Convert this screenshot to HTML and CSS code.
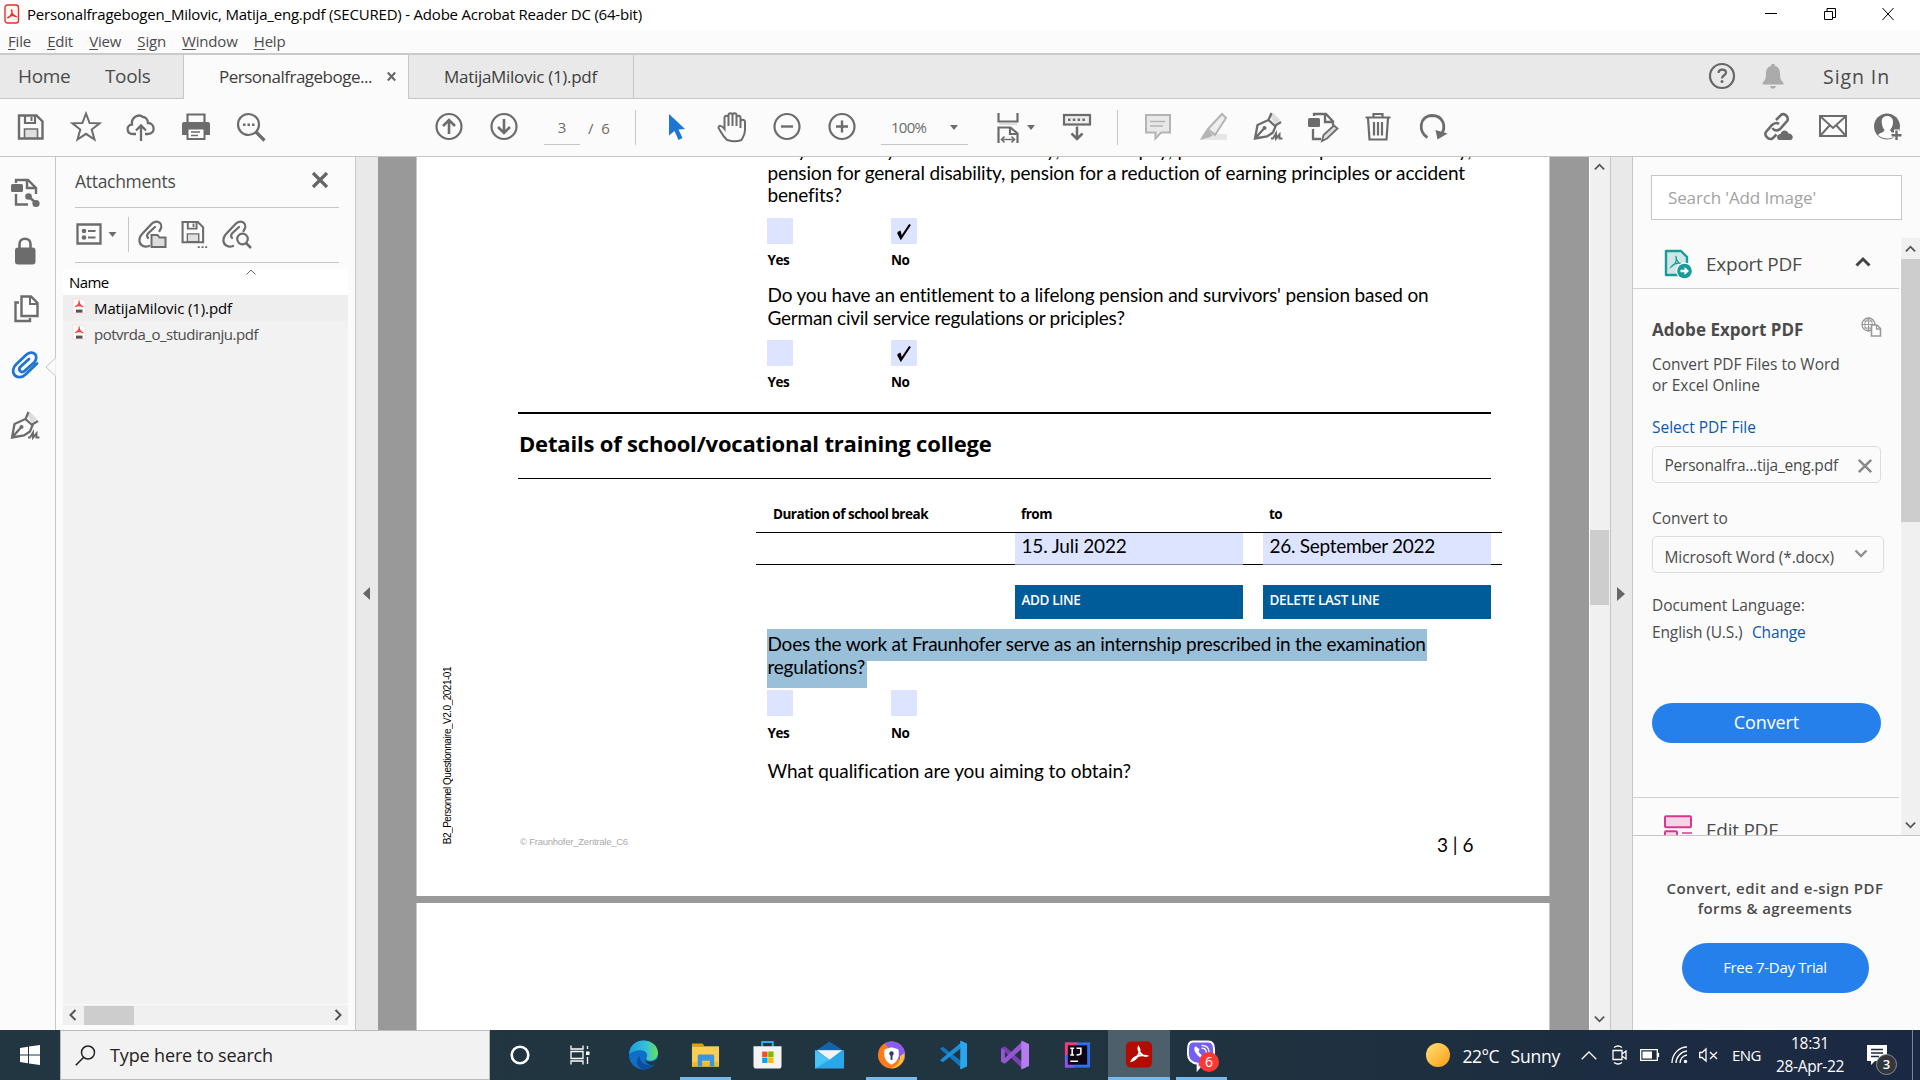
FILE: index.html
```
<!DOCTYPE html>
<html lang="en">
<head>
<meta charset="utf-8">
<title>Personalfragebogen_Milovic, Matija_eng.pdf (SECURED) - Adobe Acrobat Reader DC (64-bit)</title>
<link rel="stylesheet" href="styles.css">
</head>
<body>
<svg width="0" height="0" class="defs">
  <defs>
    <symbol id="save" viewBox="0 0 30 30"><path d="M3 3.500h17.500l6 6v17H3z" fill="none" stroke="currentColor" stroke-width="2.400"/><path d="M9 4v7h10V4" fill="none" stroke="currentColor" stroke-width="2.200"/><path d="M14.500 5h2v4h-2z" fill="currentColor"/><path d="M8.500 26v-9h13v9z" fill="#e0e0e0" stroke="currentColor" stroke-width="1.600"/></symbol>
    <symbol id="caret" viewBox="0 0 8 5"><path d="M0 0h8L4 5z" fill="currentColor"/></symbol>
    <symbol id="pen" viewBox="0 0 30 30"><path d="M17 4l3-3 7 7-5 4z" fill="#dcdcdc"/><path d="M18.500 1l-3 7L4.500 13 2 26.500 14 24.500l6-4 3-7.500 5-3M15.500 8l6.500 6M2.500 26l8-9" fill="none" stroke="currentColor" stroke-width="2.300"/><circle cx="11.500" cy="16" r="2" fill="currentColor"/><path d="M18 26.500h2l3-5v5l3.500-4v4h3" fill="none" stroke="currentColor" stroke-width="2"/></symbol>
    <symbol id="clip" viewBox="0 0 30 30"><path d="M27 14.500L15.500 25.500C12 29 7 29 4.500 26S3 18.500 6 15.500L16.500 5.500C19 3 23 3 25 5s1.500 6-1 8.500L14.500 22c-1.500 1.300-3.500 1.300-4.500 0s-.7-3.200.7-4.500L19 10" fill="none" stroke="currentColor" stroke-width="2.800" stroke-linecap="round"/></symbol>
    <symbol id="halfclip" viewBox="0 0 30 30"><path d="M12 27C7 29 3 26 2.500 22.500S4 16 6 14L15 4.500C17.500 2 21 2 23 4s1.500 5.500-.5 8M11 19c-1.500-1.500-1-3.500.5-5L18 8" fill="none" stroke="currentColor" stroke-width="2.300" stroke-linecap="round"/></symbol>
    <symbol id="up" viewBox="0 0 12 8"><path d="M1 6.500L6 1.500l5 5" fill="none" stroke="currentColor" stroke-width="2"/></symbol>
    <symbol id="down" viewBox="0 0 12 8"><path d="M1 1.500l5 5 5-5" fill="none" stroke="currentColor" stroke-width="2"/></symbol>
    <symbol id="tick" viewBox="0 0 26 26"><path d="M7 14.500l3 5.500L19 6.500" fill="none" stroke="#000" stroke-width="2.200"/><path d="M6.500 14l3-1.500L11 18l-1.500 4z"/></symbol>
    <symbol id="pdf" viewBox="0 0 16 18"><path d="M1 .5h10.500l3.500 3.500v12.500H1z" fill="#fff" stroke="#f8dada"/><path d="M8 2c.5 3 0 4.500-4.500 7.500C6 7.800 9.500 7.800 13 9.500 10.500 9 8 6 8 2z" fill="#f44" stroke="#f33" stroke-width="1.200"/><path d="M4.500 12.500h7.500v3.500H4.500z" fill="#555"/></symbol>
  </defs>
</svg>
<div class="desktop">
  <header class="titlebar">
    <svg class="appicon" viewBox="0 0 16 20"><rect x="1" y="1" width="13.500" height="18" rx="2.500" fill="#fff5f4" stroke="#e4332b" stroke-width="1.400"/><path d="M7.500 5.500c1.500 4-1 7-4 8.500 2-2.500 6-3.500 8.500-1.500-2 0-4.500-3-4.500-7z" fill="none" stroke="#e4332b" stroke-width="1.400"/></svg>
    <span class="title">Personalfragebogen_Milovic, Matija_eng.pdf (SECURED) - Adobe Acrobat Reader DC (64-bit)</span>
    <div class="winbtns">
      <svg viewBox="0 0 12 12"><path d="M0 5.500h12"/></svg>
      <svg viewBox="0 0 12 12"><path d="M.5 3.500h8v8h-8zM3 3.500v-3h8.500v9H8.500"/></svg>
      <svg viewBox="0 0 12 12"><path d="M.5 0l11 12M11.500 0l-11 12"/></svg>
    </div>
  </header>
  <nav class="menu"><span><u>F</u>ile</span><span><u>E</u>dit</span><span><u>V</u>iew</span><span><u>S</u>ign</span><span><u>W</u>indow</span><span><u>H</u>elp</span></nav>
  <div class="tabs">
    <span class="home">Home</span><span class="tools">Tools</span>
    <div class="tab active"><span>Personalfrageboge...</span><svg viewBox="0 0 9 9"><path d="M.8.5l7.400 8M8.200.5l-7.400 8" stroke="#666" stroke-width="2"/></svg></div>
    <div class="tab"><span>MatijaMilovic (1).pdf</span></div>
    <div class="account">
      <svg width="28" height="28" viewBox="0 0 28 28"><circle cx="14" cy="14" r="12" fill="none" stroke="#666" stroke-width="2.200"/><path d="M10.500 11c0-4.500 7.500-4.500 7.500-.5 0 3-4 2.500-4 6" fill="none" stroke="#666" stroke-width="2.200"/><circle cx="14" cy="19.500" r="1.500" fill="#666"/></svg>
      <svg width="22" height="26" viewBox="0 0 22 26"><path d="M9 3c0-3 4-3 4 0 4 1 5 4 5 8 0 5 1 6 3.500 9v1.500h-21V20C3 17 4 16 4 11c0-4 1-7 5-8zM8 23h6c-1 3.500-5 3.500-6 0z" fill="#ababab"/></svg>
      <span>Sign In</span>
    </div>
  </div>
  <div class="toolbar">
    <div class="group g1">
      <svg><use href="#save"/></svg>
      <svg viewBox="0 0 30 30"><path d="M15 1.500l3.600 9.500 10 .3-7.900 6.200 2.800 10L15 21.800 6.500 27.500l2.800-10L1.400 11.300l10-.3z" fill="none" stroke="currentColor" stroke-width="2"/></svg>
      <svg viewBox="0 0 30 30"><path d="M10 22H7c-7 0-7-9-1-9.500C5 6 12 1 17 5c2 0 5 2 5 6 7 0 8 11 0 11h-3M15 29V14M10 18.500l5-5 5 5" fill="none" stroke="currentColor" stroke-width="2.300"/></svg>
      <svg viewBox="0 0 30 30"><path d="M6.500 10V2.500h17V10" fill="none" stroke="currentColor" stroke-width="2.200"/><path d="M1 12q0-2 2-2h24q2 0 2 2v11h-5v-5H6v5H1z" fill="currentColor"/><path d="M6.500 16.500h17v10.500h-17z" fill="#fff" stroke="currentColor" stroke-width="2"/><path d="M10 20h9M10 23.500h7" stroke="currentColor" stroke-width="1.500"/></svg>
      <svg viewBox="0 0 30 30"><circle cx="12.500" cy="12.500" r="10.500" fill="none" stroke="currentColor" stroke-width="2.200"/><path d="M20 20l8.500 8.500" stroke="currentColor" stroke-width="3.200"/><path d="M7 11.500h2.500v2.500H7zM11.500 11.500h2.500v2.500h-2.500zM16 11.500h2.500v2.500H16z" fill="currentColor"/></svg>
    </div>
    <div class="group g2">
      <svg viewBox="0 0 30 30"><circle cx="15" cy="14.500" r="12.500" fill="none" stroke="currentColor" stroke-width="2.200"/><path d="M15 22V8M9 14l6-6 6 6" fill="none" stroke="currentColor" stroke-width="2.600"/></svg>
      <svg viewBox="0 0 30 30"><circle cx="15" cy="14.500" r="12.500" fill="none" stroke="currentColor" stroke-width="2.200"/><path d="M15 7v14M9 15l6 6 6-6" fill="none" stroke="currentColor" stroke-width="2.600"/></svg>
    </div>
    <span class="pageno">3</span><span class="pagecount">/&nbsp; 6</span><i class="sep s1"></i>
    <div class="group g3">
      <svg viewBox="0 0 30 30"><path d="M7 2l16 15-6.500.5 4 8.500-4 2-4-9L7 23.500z" fill="#1f76d0"/></svg>
      <svg viewBox="0 0 30 30"><path d="M10 28C5 23 3 18 1.500 16c0-3 3-3 6 1V6c0-3 4-3 4 0v8V3.500c0-3 4-3 4 0V14 3.500c0-3 4-3 4 0V14 6c0-3 4-3 4 0v10V10c0-3 4-3 4.500 0v8c0 5-2 7-3.500 10-4 1.500-10 1.500-14 0z" fill="none" stroke="currentColor" stroke-width="2"/></svg>
      <svg viewBox="0 0 30 30"><circle cx="15" cy="14.500" r="12.500" fill="none" stroke="currentColor" stroke-width="2.200"/><path d="M9 14.500h12" stroke="currentColor" stroke-width="2.400"/></svg>
      <svg viewBox="0 0 30 30"><circle cx="15" cy="14.500" r="12.500" fill="none" stroke="currentColor" stroke-width="2.200"/><path d="M9 14.500h12M15 8.500v12" stroke="currentColor" stroke-width="2.400"/></svg>
    </div>
    <div class="zoom"><span>100%</span><svg class="caret"><use href="#caret"/></svg></div>
    <svg class="fit" viewBox="0 0 22 30"><path d="M1.500 0v8.500h19V0M1.500 30V14.500h12l7 6V30M13 14.500v6.500h7" fill="none" stroke="currentColor" stroke-width="2.200"/><path d="M2 10h18v2H2z" fill="#ddd"/><path d="M4.500 26.500h13M7.500 23.500l-3 3 3 3M14.500 23.500l3 3-3 3" fill="none" stroke="currentColor" stroke-width="1.600"/></svg>
    <svg class="caret fitcaret"><use href="#caret"/></svg>
    <svg class="kbd" viewBox="0 0 30 30"><rect x="2" y="3" width="26" height="9.500" fill="#eee" stroke="currentColor" stroke-width="2.200"/><path d="M6 7.700h18" stroke="currentColor" stroke-width="2.500" stroke-dasharray="2.500 2.300"/><path d="M15 14.500v12M9.500 21.500l5.500 5.500 5.500-5.500" fill="none" stroke="currentColor" stroke-width="2.500"/></svg>
    <i class="sep s2"></i>
    <div class="group g4">
      <svg viewBox="0 0 30 30" class="dim"><path d="M3 3h24v17.500h-9l-5.500 6v-6H3z" fill="#e8e8e8" stroke="currentColor" stroke-width="2"/><path d="M7 9.500h15M7 14h13" stroke="currentColor" stroke-width="1.500"/></svg>
      <svg viewBox="0 0 30 30" class="dim"><path d="M9 22h20v6H3z" fill="#e6e6e6"/><path d="M24 2l4 4-11 17-7-6z" fill="#eee" stroke="currentColor" stroke-width="2"/><path d="M9 17l6 6-3 2-10 3 4-7z" fill="currentColor"/></svg>
      <svg><use href="#pen"/></svg>
      <svg viewBox="0 0 30 30"><path d="M6 4V2h12l7 7.500v4M17 2.500V10h7M5 17v10h8" fill="none" stroke="currentColor" stroke-width="2.300"/><rect x="0" y="6" width="12" height="9" rx="1.500" fill="currentColor"/><path d="M14 29l1.500-6L26 13.500l3.500 3L19 26.500z" fill="#ddd" stroke="currentColor" stroke-width="1.800"/></svg>
      <svg viewBox="0 0 30 30"><path d="M2.500 5.500h25M10.500 5V2h9v3M5 6l1.500 21.500h17L25 6M11 10v13.500M15 10v13.500M19 10v13.500" fill="none" stroke="currentColor" stroke-width="2.200"/></svg>
      <svg viewBox="0 0 30 30"><path d="M9.500 25.500C0 20 1 4 14 3.500c11 0 15 11 9 19.500" fill="none" stroke="currentColor" stroke-width="2.800"/><path d="M17.500 18l12 3.500-10 6z" fill="currentColor"/></svg>
    </div>
    <div class="group g5">
      <svg viewBox="0 0 30 30"><path d="M13 8l5-5c2.500-2.500 8 1 6.500 5.500L17 17c-2 2-6 2-7.500-1M16 12c-2-1.500-5-1-7 1l-6 7c-2 3 2 8.500 6.500 6.500l4-4" fill="none" stroke="currentColor" stroke-width="2.600"/><path d="M16 28c-3-1-2.500-6 1.500-6 1-5 7-4.500 8-.5 5 0 5.500 6 2 6.500z" fill="currentColor"/></svg>
      <svg viewBox="0 0 30 30"><path d="M2 4h26v20H2zM2.500 4.500L15 16 27.500 4.500M2.500 23.500l9-10M27.500 23.500l-9-10" fill="none" stroke="currentColor" stroke-width="2"/></svg>
      <svg viewBox="0 0 30 30"><circle cx="14" cy="14.500" r="13" fill="currentColor"/><path d="M14 4c-4.500 0-6 4-5 8 .5 3 1 4 2.500 6-1 3-4.500 2.500-6.500 5 4 4 12 5 16 1l-4-6c1.500-2 3-4 3-8 0-3.500-2-6-6-6z" fill="#fff"/><path d="M23.500 17.500v11M18 23h11" stroke="#fbfbfb" stroke-width="5"/><path d="M23.500 18.500v9.500M18.500 23.300h10" stroke="currentColor" stroke-width="2.400"/></svg>
    </div>
  </div>
  <main class="work">
    <aside class="rail">
      <svg viewBox="0 0 30 30"><path d="M6 5V2h12l8 8v6M17 2.500V10h8M6 16v10.500h12" fill="none" stroke="currentColor" stroke-width="2.400"/><rect x="1" y="6" width="12" height="8" rx="1.500" fill="currentColor"/><path d="M18 18l8 7" stroke="currentColor" stroke-width="2.500"/><circle cx="18.500" cy="18.500" r="3.300" fill="currentColor"/><circle cx="26" cy="25.500" r="3.600" fill="currentColor"/></svg>
      <svg viewBox="0 0 30 30"><path d="M9.500 13V8c0-7 11-7 11 0v5" fill="none" stroke="currentColor" stroke-width="2.600"/><rect x="5" y="11.500" width="20.500" height="17" rx="3" fill="currentColor"/></svg>
      <svg viewBox="0 0 30 30"><path d="M9 8.500H5.500V27H20v-3" fill="none" stroke="currentColor" stroke-width="2.400"/><path d="M11.500 2.500h9.500l6.500 6.500v13h-16z" fill="#fff" stroke="currentColor" stroke-width="2.400"/><path d="M20 3v7h7" fill="none" stroke="currentColor" stroke-width="2"/></svg>
      <div class="current"><svg><use href="#clip"/></svg><svg class="notch" viewBox="0 0 11 18"><path d="M10.500 0v18H12V0z" fill="#fbfbfb"/><path d="M10.500 0L1 9l9.500 9" fill="#fbfbfb" stroke="#c4c4c4"/></svg></div>
      <svg><use href="#pen"/></svg>
    </aside>
    <section class="attach">
      <div class="ahead"><span>Attachments</span><svg viewBox="0 0 16 16"><path d="M1 1l14 14M15 1L1 15" stroke="#666" stroke-width="3.200"/></svg></div>
      <div class="atools">
        <svg class="opt" viewBox="0 0 26 22"><path d="M1.500 1.500h23v19h-23z" fill="none" stroke="currentColor" stroke-width="2.300"/><circle cx="8" cy="8" r="2.300" fill="currentColor"/><circle cx="8" cy="14.500" r="2.300" fill="currentColor"/><path d="M12 8h7.500M12 14.500h7.500" stroke="currentColor" stroke-width="2"/></svg>
        <svg class="caret"><use href="#caret"/></svg><i class="sep"></i>
        <svg viewBox="0 0 30 30"><use href="#halfclip"/><path d="M14.500 16h6l2 2.500h6v9.500h-14z" fill="#ddd" stroke="currentColor" stroke-width="2"/></svg>
        <svg viewBox="0 0 30 32"><use href="#save" width="28" height="28"/><path d="M19 30h10" stroke="currentColor" stroke-width="2" stroke-dasharray="2.200 1.800"/></svg>
        <svg viewBox="0 0 30 30"><use href="#halfclip"/><circle cx="21.500" cy="20" r="5.300" fill="#fbfbfb" stroke="currentColor" stroke-width="2.200"/><path d="M25 24l5 5" stroke="currentColor" stroke-width="2.500"/></svg>
      </div>
      <div class="list">
        <div class="lhead"><svg class="sort" viewBox="0 0 10 6"><path d="M.5 5.500L5 1l4.500 4.500" fill="none" stroke="#666"/></svg><span>Name</span></div>
        <div class="row sel"><svg><use href="#pdf"/></svg><span class="r1">MatijaMilovic (1).pdf</span></div>
        <div class="row"><svg><use href="#pdf"/></svg><span class="r2">potvrda_o_studiranju.pdf</span></div>
      </div>
      <div class="hscroll"><svg viewBox="0 0 8 12"><path d="M6.500 1l-5 5 5 5" fill="none" stroke="#555" stroke-width="2"/></svg><i></i><svg viewBox="0 0 8 12"><path d="M1.500 1l5 5-5 5" fill="none" stroke="#555" stroke-width="2"/></svg></div>
    </section>
    <div class="strip left"><svg width="7" height="13" viewBox="0 0 7 13"><path d="M7 0v13L0 6.500z" fill="#666"/></svg></div>
    <section class="canvas">
      <article class="page">
        <div class="margin"><span>B2_Personnel Questionnaire_V2.0_2021-01</span></div>
        <div class="content">
          <div class="q q1"><p class="l0">Do you already receive an annuity, widow's pay, pension for occupational disability,</p><p class="l1">pension for general disability, pension for a reduction of earning principles or accident</p><p>benefits?</p></div>
          <div class="boxes b1"><i></i><i><svg><use href="#tick"/></svg></i></div>
          <div class="yn"><b>Yes</b><b>No</b></div>
          <div class="q q2"><p>Do you have an entitlement to a lifelong pension and survivors' pension based on</p><p class="l2">German civil service regulations or priciples?</p></div>
          <div class="boxes b2"><i></i><i><svg><use href="#tick"/></svg></i></div>
          <div class="yn y2"><b>Yes</b><b>No</b></div>
          <h2>Details of school/vocational training college</h2>
          <div class="thead"><b>Duration of school break</b><b>from</b><b>to</b></div>
          <div class="trow"><span class="d1">15. Juli 2022</span><span>26. September 2022</span></div>
          <div class="btns"><b>ADD LINE</b><b>DELETE LAST LINE</b></div>
          <div class="selection"><div class="sa">Does the work at Fraunhofer serve as an internship prescribed in the examination</div><div class="sb"><p>regulations?</p></div></div>
          <div class="boxes b3"><i></i><i></i></div>
          <div class="yn y3"><b>Yes</b><b>No</b></div>
          <div class="q q3"><p>What qualification are you aiming to obtain?</p></div>
          <footer><small>© Fraunhofer_Zentrale_C6</small><span>3 | 6</span></footer>
        </div>
      </article>
      <article class="page next"></article>
    </section>
    <div class="vscroll doc"><svg><use href="#up"/></svg><i></i><svg><use href="#down"/></svg></div>
    <div class="strip right"><svg width="8" height="14" viewBox="0 0 8 14"><path d="M0 0v14l8-7z" fill="#666"/></svg></div>
    <aside class="panel">
      <div class="search">Search 'Add Image'</div>
      <div class="ptools">
        <div class="pcol">
          <div class="phead"><svg class="exp" viewBox="0 0 28 30"><path d="M2 2h15l6 6v18H2z" fill="#cfe6e6" stroke="#1a9a9a" stroke-width="2.400" stroke-linejoin="round"/><path d="M12 7c1 5-1 9-5 11 2-3 7-5 11-3-3 0-6-3-6-8z" fill="none" stroke="#1a9a9a" stroke-width="1.300"/><circle cx="20.500" cy="22" r="8.500" fill="#fbfbfb"/><circle cx="20.500" cy="22" r="7.300" fill="#1a9a9a"/><path d="M16.500 20.800h4v-2.800l4.500 4-4.500 4v-2.800h-4z" fill="#fff"/></svg><span>Export PDF</span><svg class="chev" viewBox="0 0 16 10"><path d="M1.500 8.500L8 2l6.500 6.500" fill="none" stroke="#444" stroke-width="3"/></svg></div>
          <div class="pbody">
            <div class="ptitle"><b>Adobe Export PDF</b><svg viewBox="0 0 20 20"><circle cx="7.500" cy="7.500" r="6.500" fill="none" stroke="#999" stroke-width="1.300"/><path d="M1 7.500h13M7.500 1v13M2.500 4h10M2.500 11h10M7.500 1c-5 4-5 9 0 13M7.500 1c5 4 5 9 0 13" fill="none" stroke="#999"/><path d="M10.500 8h5.500l3.500 3.500V19h-9z" fill="#fff" stroke="#999" stroke-width="1.600"/><path d="M15.500 8v4h4" fill="none" stroke="#999" stroke-width="1.300"/></svg></div>
            <p class="desc">Convert PDF Files to Word<br>or Excel Online</p>
            <a class="pick">Select PDF File</a>
            <div class="file"><span>Personalfra...tija_eng.pdf</span><svg viewBox="0 0 14 14"><path d="M.8.800l12.400 12.400M13.200.8L.8 13.200" stroke="#8a8a8a" stroke-width="2.600"/></svg></div>
            <p class="conv">Convert to</p>
            <div class="drop"><span>Microsoft Word (*.docx)</span><svg viewBox="0 0 14 9"><path d="M1.500 1.500L7 7l5.500-5.500" fill="none" stroke="#8f8f8f" stroke-width="2.400"/></svg></div>
            <p class="lang">Document Language:</p>
            <p class="lang2">English (U.S.) <a>Change</a></p>
            <div class="cbtn">Convert</div>
          </div>
          <div class="phead edit"><svg viewBox="0 0 28 30"><rect x="1" y="1.300" width="26" height="11" rx="1" fill="#f7d3e6" stroke="#d83790" stroke-width="2"/><rect x="1" y="16.300" width="12" height="11" rx="1" fill="#f7d3e6" stroke="#d83790" stroke-width="2"/><path d="M18 18h10" stroke="#d83790" stroke-width="1.500"/></svg><span>Edit PDF</span></div>
        </div>
        <div class="vscroll tools2"><svg><use href="#up"/></svg><i></i><svg><use href="#down"/></svg></div>
      </div>
      <div class="promo"><p>Convert, edit and e-sign PDF</p><p class="p2">forms &amp; agreements</p><div class="trial">Free 7-Day Trial</div></div>
    </aside>
  </main>
  <footer class="taskbar">
    <div class="start"><svg width="20" height="20" viewBox="0 0 20 20"><path d="M0 3l8-1.200v7.700H0zM9 1.600L20 0v9.500H9zM0 10.500h8v7.700L0 17zM9 10.500h11V20L9 18.400z" fill="#fff"/></svg></div>
    <div class="find"><svg width="21" height="21" viewBox="0 0 21 21"><circle cx="13" cy="7.500" r="6.500" fill="none" stroke="#222" stroke-width="1.500"/><path d="M8.500 12.500L.8 20.200" stroke="#222" stroke-width="1.600"/></svg><span>Type here to search</span></div>
    <div class="sys"><svg viewBox="0 0 30 30"><circle cx="15" cy="15" r="8.300" fill="none" stroke="#fff" stroke-width="2.600"/></svg></div>
    <div class="sys"><svg viewBox="0 0 30 30"><path d="M6 5.500v3.500h12V5.500M6 24.500v-3.500h12v3.500M6 11.500h12v7H6zM22.500 6v3M22.500 17v7" fill="none" stroke="#fff" stroke-width="1.300"/><path d="M21 11.500h3.500v3.500h-3.500z" fill="#fff"/></svg></div>
    <div class="apps">
      <div><svg viewBox="0 0 30 30"><defs><linearGradient id="e1" x1="0" x2="1"><stop stop-color="#1b9de2"/><stop offset=".6" stop-color="#35c1d6"/><stop offset="1" stop-color="#6be05a"/></linearGradient></defs><circle cx="15" cy="15" r="15" fill="#0f6fc6"/><path d="M0 14C1 4 8 0 15 0c9 0 15 6 15 13 0 5-4 8-8 8-3 0-5-1-4-3 2-3 0-8-6-8-5 0-10 2-12 4z" fill="url(#e1)"/><path d="M11 16c0 6 5 10 11 9 2 0 4-1 5-2-3 5-8 7-12 7-7-1-9-10-4-14z" fill="#0c4ea0"/><path d="M18 17.500c-1 2 0 4 4 4.300 3 .2 6-1.300 7.500-3.300L31 24l-3 .5c-2 .8-4 1-6 .5-4-1-6-4-4-7.500z" fill="#213640"/></svg></div>
      <div class="run"><svg viewBox="0 0 30 30"><path d="M1 3h11l2 3H1z" fill="#e0a100"/><path d="M1 6h28v21H1z" fill="#fccd55"/><path d="M1 22h28v5H1z" fill="#f0b93a"/><path d="M7 27V16q0-1.500 1.500-1.500h14q1.500 0 1.500 1.500v11h-4.500v-6h-8v6z" fill="#3a95e0"/></svg></div>
      <div><svg viewBox="0 0 30 30"><path d="M9.500 7V1.500h11V7" fill="none" stroke="#27b3ea" stroke-width="2"/><path d="M.5 6h29v20q0 3-3 3h-23q-3 0-3-3z" fill="#f3f3f3"/><path d="M9.500 11.500H15V17H9.500z" fill="#f25022"/><path d="M15.700 11.500h5.500V17h-5.500z" fill="#7fba00"/><path d="M9.500 17.700H15v5.500H9.500z" fill="#00a4ef"/><path d="M15.700 17.700h5.500v5.500h-5.500z" fill="#ffb900"/></svg></div>
      <div><svg viewBox="0 0 30 30"><path d="M0 11L15 1l15 10z" fill="#1463ad"/><path d="M0 10h30v19H0z" fill="#2aa7ea"/><path d="M2 10h26L15 20z" fill="#f4f4f4"/><path d="M0 10l15 10L0 29z" fill="#4ac3f7"/></svg></div>
      <div class="run"><svg viewBox="0 0 30 30"><circle cx="15" cy="15" r="14" fill="#ff7a1c"/><path d="M8 3c9-5 21 0 21 12 0 4-1 6-3 8z" fill="#8a5cf5"/><path d="M28.500 13C29 23 22 29 14 29c6-2 10-6 10-13z" fill="#fcc52c"/><path d="M8 9l7-2 7 2c2 8-1 13-7 16-6-3-9-8-7-16z" fill="#fff"/><circle cx="15" cy="13.500" r="2.300" fill="#3a3560"/><path d="M14 14h2v6h-2z" fill="#3a3560"/></svg></div>
      <div><svg viewBox="0 0 30 30"><path d="M1 8.500l3-2L24 22v7z" fill="#1277bd"/><path d="M1 20.500l3 2L24 7V1z" fill="#1c8fd8"/><path d="M22 0l7 3v24L22 30z" fill="#2aa5f0"/></svg></div>
      <div><svg viewBox="0 0 30 30"><path d="M0 8l4-2 18 16v7z" fill="#7b3fb0"/><path d="M0 8v14l4 2L22 8V1L4 18V10z" fill="#9457cf"/><path d="M21 0l8 3.500v23L21 30z" fill="#b57cf0"/></svg></div>
      <div><svg viewBox="0 0 30 30"><path d="M2 2h26v26H2z" fill="#2f6ff0"/><path d="M2 2h14L2 17z" fill="#fa3a78"/><path d="M2 28V17l10 11z" fill="#9150e8"/><path d="M5 5h20v20H5z" fill="#0c0612"/><path d="M7.500 8h4M9.500 8v7M7.500 15h4M14 8H18.500v5q0 2-4.500 2M7.500 21.500h8" fill="none" stroke="#fff" stroke-width="1.600"/></svg></div>
      <div class="run on"><svg viewBox="0 0 30 30"><rect x="1" y="1" width="27" height="27" rx="5" fill="#b30b00"/><path d="M14 7c3 4-1 12-7 14 2-4 9-7 15-5-4 1-9-5-8-9z" fill="none" stroke="#fff" stroke-width="1.900"/></svg></div>
      <div class="run"><svg viewBox="0 0 30 30"><path d="M6 1h16q6 0 6 8v6q0 9-8 9h-4l-5 6v-6Q1 23 1 14V9q0-8 5-8z" fill="#7360f2" stroke="#fff" stroke-width="2"/><path d="M9 6c-5 3 4 14 11 14l2-3-4-2-2 1-4-4 1-3z" fill="#fff"/><path d="M15 5q8 0 8 8M15 8q5 0 5 5" fill="none" stroke="#fff" stroke-width="1.300"/></svg><em>6</em></div>
    </div>
    <div class="tray">
      <i class="sun"></i><span class="temp">22°C</span><span class="sunny">Sunny</span>
      <svg class="t1" viewBox="0 0 16 9"><path d="M.7 8.300L8 1l7.300 7.300"/></svg>
      <svg class="t2" viewBox="0 0 15 20"><path d="M1 5.500h9v9H1zM10 9l4-3v8l-4-3M2 2.500q4-3 8 0M2 17.500q4 3 8 0"/></svg>
      <svg class="t3" viewBox="0 0 20 12"><path d="M.7.700h16.600v10.600H.7zM18.500 4v4"/><path d="M2.500 2.500h9.500v7H2.500z" fill="#fff" stroke="none"/></svg>
      <svg class="t4" viewBox="0 0 18 18"><path d="M1 17C1 8 8 1 16 1M5 17c0-6 5-11.500 11-12M9 17c0-4 3-7.500 7-8"/><circle cx="14.500" cy="15.500" r="1.700" fill="#fff" stroke="none"/></svg>
      <svg class="t5" viewBox="0 0 19 14"><path d="M.7 4.500H3l4-3.500v12l-4-3.500H.7zM11 4l7 7M18 4l-7 7"/></svg>
      <span class="eng">ENG</span>
      <div class="clock"><span>18:31</span><span class="date">28-Apr-22</span></div>
      <div class="note"><svg width="20" height="20" viewBox="0 0 20 20"><path d="M0 0h20v16H8l-4 4v-4H0z" fill="#fff"/><path d="M4 4.500h12M4 8h12M4 11.500h8" stroke="#1c2a40" stroke-width="1.300"/></svg><em>3</em></div>
      <i class="peek"></i>
    </div>
  </footer>
</div>
</body>
</html>
```
FILE: styles.css
```
* { box-sizing: border-box; }
body { margin: 0; font-family: "Open Sans", "Noto Sans", sans-serif; color: #4b4b4b; }
p, h2 { margin: 0; }
.defs { position: absolute; }
.desktop { width: 1920px; height: 1080px; display: flex; flex-direction: column; overflow: hidden; background: #fbfbfb; white-space: nowrap; }
svg { flex: none; display: block; overflow: visible; }
span, b, i { flex: none; }

.titlebar { height: 29px; flex: none; background: #fff; display: flex; align-items: center; padding-left: 4px; color: #000; }
.appicon { width: 16px; height: 20px; margin-top: -2px; }
.title { font-size: 15px; letter-spacing: -.2px; margin: -2px 0 0 7px; line-height: 24px; }
.winbtns { margin: -1px 26px 0 auto; display: flex; gap: 46.500px; }
.winbtns svg { width: 12px; height: 12px; fill: none; stroke: #000; stroke-width: 1; }
.menu { height: 26px; flex: none; display: flex; font-size: 15px; line-height: 25px; letter-spacing: -.2px; border-bottom: 2px solid #cacaca; padding-left: 8px; gap: 16.200px; background: #fbfbfb; }
.menu u { text-underline-offset: 2px; }

.tabs { height: 44px; flex: none; background: #e9e9e9; border-bottom: 1px solid #c6c6c6; display: flex; line-height: 42px; }
.home, .tools { font-size: 19px; letter-spacing: -.35px; }
.home { margin-left: 18px; width: 87px; }
.tools { width: 78px; }
.tab { display: flex; align-items: center; width: 225px; height: 43px; padding-left: 35px; font-size: 17px; letter-spacing: -.29px; color: #3d3d3d; border-right: 1px solid #c6c6c6; }
.tab.active { background: #fbfbfb; height: 44px; width: 226px; letter-spacing: -.5px; padding-left: 35px; border-left: 1px solid #c6c6c6; }
.tab svg { width: 9px; height: 9px; margin: -1px 0 0 15px; }
.account { margin-left: auto; display: flex; align-items: center; padding-right: 30px; }
.account svg { margin-top: -2px; }
.account svg + svg { margin: -2px 39px 0 26px; }
.account span { font-size: 19.500px; letter-spacing: .9px; line-height: 44px; }

.toolbar { height: 58px; flex: none; border-bottom: 1px solid #c6c6c6; display: flex; align-items: center; color: #6c6c6c; }
.group { display: flex; align-items: center; gap: 25px; flex: none; }
.group svg { width: 30px; height: 30px; margin-top: -1px; }
.dim { color: #b4b4b4; }
.g1 { margin-left: 15.500px; }
.g2 { margin-left: 168.500px; }
.g2 + .pageno { margin-left: 25px; }
.pageno { width: 36px; height: 34px; line-height: 32px; border-bottom: 1px solid #c6c6c6; text-align: center; font-size: 15px; }
.pagecount { font-size: 15px; margin-left: 8px; width: 47px; }
.sep { width: 1px; height: 35px; background: #c6c6c6; }
.g3 { margin-left: 26px; }
.zoom { width: 87px; margin-left: 24px; height: 34px; border-bottom: 1px solid #c6c6c6; display: flex; align-items: center; padding: 0 10px; justify-content: space-between; font-size: 15px; letter-spacing: -.75px; }
.caret { width: 8px; height: 5px; }
.fit { width: 22px; height: 30px; margin-left: 28.500px; }
.fitcaret { margin-left: 8px; }
.kbd { width: 30px; height: 30px; margin: -1px 0 0 27px; }
.s2 { margin-left: 25px; }
.g4 { margin-left: 25px; }
.g5 { margin: 0 17.500px 0 auto; }

.work { flex: 1; min-height: 0; display: flex; }
.rail { width: 56px; flex: none; border-right: 1px solid #c6c6c6; padding: 21px 5px 0 0; display: flex; flex-direction: column; gap: 28px; align-items: center; color: #6c6c6c; }
.rail svg { width: 30px; height: 30px; }
.current { position: relative; color: #1f76d0; margin: -3px 0 4px; }
.current .notch { position: absolute; left: 35px; top: 9px; width: 11px; height: 18px; }
.attach { width: 300px; flex: none; border-right: 1px solid #c6c6c6; padding: 0 7px; display: flex; flex-direction: column; }
.ahead { margin: 0 9px 0 12px; height: 51px; border-bottom: 1px solid #c6c6c6; display: flex; justify-content: space-between; padding: 7px 11px 0 0; font-size: 17.500px; letter-spacing: -.3px; line-height: 34px; flex: none; }
.ahead svg { width: 16px; height: 16px; margin-top: 8px; }
.atools { margin: 0 9px 0 12px; height: 55px; flex: none; border-bottom: 1px solid #c6c6c6; display: flex; align-items: center; color: #6c6c6c; padding-bottom: 2px; }
.atools svg { width: 30px; height: 30px; margin-right: 12px; }
.atools .opt { width: 26px; height: 22px; margin: 0 6px 0 1px; }
.atools .caret { width: 9px; height: 5px; margin-right: 11px; }
.atools .sep { margin-right: 8px; }
.list { flex: 1; margin-top: 6px; background: #f2f2f2; font-size: 15px; color: #000; }
.lhead { background: #fff; height: 26px; line-height: 27px; padding-left: 6px; position: relative; letter-spacing: -.6px; }
.sort { position: absolute; left: 183px; top: 0; width: 10px; height: 6px; }
.row { height: 26px; line-height: 26px; display: flex; color: #4b4b4b; }
.row.sel { background: #eee; color: #000; }
.row svg { width: 14px; height: 17px; margin: 3px 9px 0; }
.row span { margin-left: -1px; }
.r1 { letter-spacing: -.11px; }
.r2 { letter-spacing: -.48px; }
.hscroll { height: 20px; margin: 1px 0 5px; background: #f0f0f0; display: flex; align-items: center; padding: 0 6px; }
.hscroll svg { width: 8px; height: 12px; }
.hscroll i { width: 50px; height: 19px; background: #cdcdcd; margin: 0 auto 0 7px; }
.strip { width: 22px; flex: none; background: #e9e9e9; display: flex; align-items: center; padding-left: 7px; }
.strip.right { width: 23px; border-right: 1px solid #c6c6c6; padding-left: 6px; border-left: 1px solid #c6c6c6; }
.canvas { width: 1211px; flex: none; background: #999; padding-left: 38px; overflow: hidden; }
.page { width: 1134px; height: 739px; background: #fff; border: solid #c6c6c6; border-width: 0 1px; display: flex; color: #000; font-family: Lato, "Open Sans", sans-serif; }
.page.next { margin-top: 7px; }
.margin { width: 101px; flex: none; height: 687px; display: flex; align-items: flex-end; padding-left: 24px; }
.margin span { writing-mode: vertical-rl; transform: rotate(180deg); font: 10px/14px "Liberation Sans", Arial, sans-serif; letter-spacing: -.49px; }
.content { width: 985px; flex: none; }
.q, .selection { margin-left: 249.500px; font-size: 19px; line-height: 22.500px; letter-spacing: -.16px; }
.q1 { margin-top: -18px; }
.l0 { letter-spacing: .2px; }
.l1 { letter-spacing: -.14px; }
.l2 { letter-spacing: -.24px; }
.boxes { margin-left: 249px; display: flex; gap: 98px; height: 26px; }
.boxes i { width: 26px; background: #dde4ff; }
.boxes svg { width: 26px; height: 26px; }
.b1 { margin-top: 11.500px; }
.yn { margin: 8px 0 0 249.500px; display: flex; font: 13.500px/16px "Open Sans", sans-serif; letter-spacing: -.45px; height: 16px; }
.yn b { width: 123.500px; }
.q2 { margin-top: 16.300px; }
.b2 { margin-top: 10.500px; }
h2 { margin-top: 22px; border: solid #000; border-width: 2px 0 1px; width: 973px; height: 67px; font: bold 22px/30px "Open Sans", sans-serif; letter-spacing: -.18px; padding: 14px 0 0 1px; }
.thead { margin: 27px 0 10px 255px; display: flex; font: 13.500px/16px "Open Sans", sans-serif; letter-spacing: -.5px; }
.thead b { width: 248px; }
.trow { margin-left: 238px; width: 746px; height: 33px; border: solid #000; border-width: 1px 0; display: flex; gap: 20px; padding-left: 259px; font-size: 19px; letter-spacing: -.29px; line-height: 26px; }
.trow span { width: 228px; height: 32px; background: #dde4ff; padding-left: 6.500px; border-bottom: 1px solid #858aa8; }
.trow .d1 { letter-spacing: -.15px; }
.btns { margin: 20px 0 0 497px; display: flex; gap: 20px; font: 13.500px/31px "Open Sans", sans-serif; letter-spacing: -.35px; height: 34px; color: #fff; }
.btns b { width: 228px; background: #005b99; padding-left: 6.500px; font-weight: 600; }
.selection { margin: 10px 0 0 249px; letter-spacing: -.22px; }
.sa { width: 660px; height: 32px; padding: 4.400px 0 0 .5px; background: #99bfd9; }
.sb { width: 100px; height: 27px; padding-left: .5px; background: #99bfd9; display: flex; }
.sb p { margin-top: -4.600px; }
.b3 { margin-top: 2px; }
.y3 { margin-top: 9px; }
.q3 { margin-top: 19px; letter-spacing: -.08px; }
footer { flex: none; }
.content footer { margin: 51.500px 29.500px 0 2px; display: flex; justify-content: space-between; font-size: 19px; line-height: 22.500px; }
.content small { font: 9.500px/12px "Liberation Sans", Arial, sans-serif; letter-spacing: -.24px; color: #aaa; margin-top: 2px; }

.vscroll { background: #f0f0f0; width: 21px; flex: none; display: flex; flex-direction: column; align-items: center; border-left: 1px solid #fff; padding-right: 2px; }
.vscroll svg { width: 11px; height: 8px; color: #555; }
.vscroll i { width: 19px; background: #cdcdcd; }
.doc { padding: 6px 1px 7px 0; }
.doc i { height: 75px; margin: 359px 0 auto; }
.panel { width: 287px; flex: none; display: flex; flex-direction: column; }
.search { margin: 18px 18px 18px; height: 45px; flex: none; border: 1px solid #c6c6c6; background: #fff; color: #a3a3a3; font-size: 17px; letter-spacing: -.13px; line-height: 43px; padding-left: 16px; }
.ptools { height: 598px; flex: none; overflow: hidden; border-bottom: 1px solid #c6c6c6; display: flex; }
.pcol { width: 267px; flex: none; padding-right: 1px; }
.tools2 { width: 20px; padding: 7px 1px 6px 0; }
.tools2 i { height: 263px; margin: 6px 0 auto; }
.phead { height: 51px; border-bottom: 1px solid #d0d0d0; display: flex; padding-left: 31px; font-size: 19px; letter-spacing: -.25px; line-height: 52px; }
.phead svg { width: 28px; height: 30px; margin: 11px 14px 0 0; }
.phead .chev { width: 16px; height: 10px; margin: 19px 0 0 53px; }
.pbody { height: 509px; border-bottom: 1px solid #d0d0d0; padding-left: 19px; font-size: 15.500px; }
.ptitle { display: flex; justify-content: space-between; padding: 28px 18px 0 0; }
.ptitle b { font-size: 17px; line-height: 26px; letter-spacing: .03px; }
.ptitle svg { width: 20px; height: 20px; }
.desc { line-height: 21px; margin-top: 10.500px; }
.pick, a { color: #0b57a8; }
.pick { display: block; line-height: 22px; margin-top: 20.500px; }
.file, .drop { border: 1px solid #dcdcdc; border-radius: 5px; width: 229px; height: 37px; margin-top: 8px; display: flex; justify-content: space-between; align-items: center; padding: 0 8px 0 11.500px; letter-spacing: -.22px; }
.file svg { width: 14px; height: 14px; margin-top: 2px; }
.conv { margin-top: 24px; line-height: 22px; }
.drop { width: 232px; margin-top: 7px; letter-spacing: -.11px; padding: 5px 15px 0 11.500px; }
.drop svg { width: 14px; height: 9px; margin-top: -7px; }
.lang { margin-top: 21px; line-height: 22px; letter-spacing: -.05px; }
.lang2 { margin-top: 5px; line-height: 22px; letter-spacing: -.13px; }
.lang2 a { margin-left: 5.500px; }
.cbtn { margin-top: 60px; width: 229px; height: 40px; border-radius: 20px; background: #2680eb; color: #fff; text-align: center; font-size: 18px; line-height: 38px; letter-spacing: -.1px; }
.edit { border: 0; height: 36px; }
.edit svg { margin: 17px 14px 0 0; }
.edit span { line-height: 64px; }
.promo { text-align: center; padding: 42px 3px 0 0; font-size: 15px; font-weight: 600; line-height: 20px; letter-spacing: .48px; }
.promo .p2 { letter-spacing: .35px; }
.trial { margin: 25px auto 0; width: 187px; height: 50px; border-radius: 25px; background: #2680eb; color: #fff; font-weight: 400; letter-spacing: -.33px; line-height: 49px; }

.taskbar { height: 50px; display: flex; background: linear-gradient(90deg, #213640 0, #213540 55%, #1e2f40 75%, #1b2843 100%); color: #fff; }
.start { width: 60px; flex: none; padding: 15px 20px; }
.find { width: 430px; flex: none; background: #f2f2f2; border: 1px solid #bbb; display: flex; align-items: center; padding-left: 14px; color: #222; font-size: 18px; letter-spacing: -.14px; }
.find span { margin-left: 14px; margin-top: -1px; }
.sys { width: 60px; flex: none; padding: 10px 15px; }
.sys svg { width: 30px; height: 30px; }
.apps { display: flex; margin-left: 2px; flex: none; }
.apps div { width: 62px; padding: 10px 16.500px 0; position: relative; }
.apps svg { width: 29px; height: 30px; }
.apps .run { background: linear-gradient(#76b9ed, #76b9ed) center bottom / 51px 3px no-repeat; }
.apps .on { background: linear-gradient(#76b9ed, #76b9ed) center bottom / 62px 3px no-repeat, #4d5f6b; }
em { position: absolute; font-style: normal; text-align: center; border-radius: 10px; }
.apps em { left: 29px; top: 22px; width: 20px; height: 20px; background: #fa3a33; font-size: 14px; line-height: 19px; }
.tray { margin-left: auto; display: flex; align-items: center; height: 50px; flex: none; width: 494px; }
.tray > svg { fill: none; stroke: #fff; stroke-width: 1.300; }
.sun { width: 24px; height: 24px; border-radius: 50%; background: linear-gradient(135deg, #ffe27a, #ff9d12); }
.temp { font-size: 17.500px; margin: 2px 0 0 12.500px; letter-spacing: -.5px; width: 48px; }
.sunny { font-size: 17.500px; margin-top: 2px; letter-spacing: -.2px; width: 70px; }
.t1 { width: 16px; height: 9px; margin-right: 15px; }
.t2 { width: 15px; height: 20px; margin-right: 13px; }
.t3 { width: 20px; height: 12px; margin-right: 11px; }
.t4 { width: 18px; height: 18px; margin-right: 10px; }
.t5 { width: 19px; height: 14px; margin-right: 14.500px; }
.eng { font-size: 15px; letter-spacing: -.6px; width: 43px; }
.clock { width: 70px; text-align: center; font-size: 15.500px; letter-spacing: -.35px; line-height: 23px; display: flex; flex-direction: column; }
.note { position: relative; margin-left: 22px; width: 45px; height: 20px; }
.note em { left: 9px; top: 9px; width: 21px; height: 21px; background: #33373c; border: 1px solid #8a8f96; border-radius: 50%; font-size: 13px; font-weight: 600; line-height: 18px; }
.peek { width: 1px; height: 50px; background: #7d8594; }
```
